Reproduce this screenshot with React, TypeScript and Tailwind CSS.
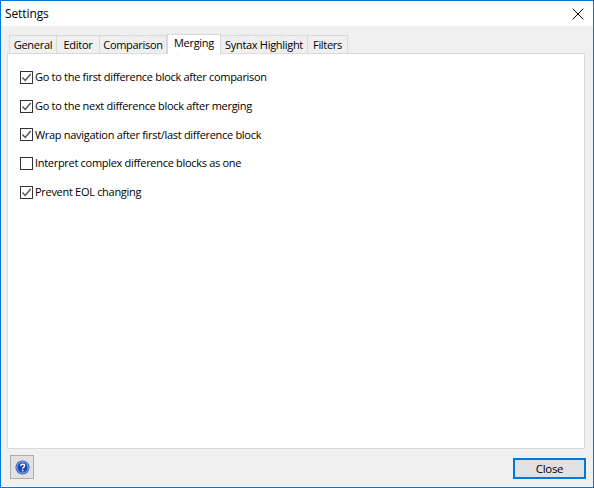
import React from 'react'
import { X } from 'lucide-react'

const tabs = ['General', 'Editor', 'Comparison', 'Merging', 'Syntax Highlight', 'Filters']

const options = [
  { label: 'Go to the first difference block after comparison', checked: true },
  { label: 'Go to the next difference block after merging', checked: true },
  { label: 'Wrap navigation after first/last difference block', checked: true },
  { label: 'Interpret complex difference blocks as one', checked: false },
  { label: 'Prevent EOL changing', checked: true },
]

const tabWidths: Record<string, string> = {
  General: 'w-[48px]',
  Editor: 'w-[43px]',
  Comparison: 'w-[67px]',
  Merging: 'w-[54px]',
  'Syntax Highlight': 'w-[87px]',
  Filters: 'w-[40px]',
}

function HelpIcon() {
  return (
    <svg width="15" height="15" viewBox="0 0 15 15">
      <circle cx="7.5" cy="7.5" r="7" fill="#2f5fc4" />
      <circle cx="7.5" cy="7.5" r="5.6" fill="#1c49b8" stroke="#9db9ea" strokeWidth="1" />
      <path d="M5.6 5.9c.1-1.1.9-1.7 2-1.7s2 .6 2 1.6c0 1.5-2 1.5-2 3" fill="none" stroke="#fff" strokeWidth="1.4" />
      <rect x="6.9" y="9.8" width="1.5" height="1.5" fill="#fff" />
    </svg>
  )
}

function CheckMark() {
  return (
    <svg width="11" height="11" viewBox="0 0 11 11">
      <path d="M1.5 5.5 4.2 8.4 9.7 2" fill="none" stroke="#555" strokeWidth="1.5" />
    </svg>
  )
}

export default function App() {
  return (
    <div className="relative w-[594px] h-[488px] flex flex-col overflow-hidden border border-[#0078d7] bg-[#f0f0f0] text-[11px] tracking-[-0.3px] text-black font-['Open_Sans','Noto_Sans',sans-serif]">
      <div className="h-[25px] shrink-0 bg-white flex items-center justify-between pl-[4px] pr-[5px]">
        <span className="text-[12px] tracking-[-0.1px]">Settings</span>
        <X size={20} strokeWidth={1.2} className="text-black" />
      </div>

      <div className="flex-1 flex flex-col pt-[9px] px-[6px]">
        <div className="flex h-[18px] pl-[2px] items-end relative z-10">
          {tabs.map((t) =>
            t === 'Merging' ? (
              <div
                key={t}
                className={`${tabWidths[t]} h-[20px] -mb-px bg-white border border-b-0 border-[#d9d9d9] flex items-start justify-center leading-[16px] whitespace-nowrap`}
              >
                {t}
              </div>
            ) : (
              <div
                key={t}
                className={`${tabWidths[t]} h-[18px] border border-l-0 first:border-l border-b-0 border-[#d9d9d9] flex items-center justify-center leading-none whitespace-nowrap`}
              >
                {t}
              </div>
            ),
          )}
        </div>

        <div className="h-[396px] w-[578px] bg-white border border-[#d9d9d9] flex flex-col gap-[15.7px] pt-[17px] pl-[12px]">
          {options.map((o) => (
            <label key={o.label} className="flex items-center gap-[2px] h-[13px]">
              <span className="w-[13px] h-[13px] shrink-0 border border-[#333] bg-white flex items-center justify-center">
                {o.checked && <CheckMark />}
              </span>
              <span className="whitespace-nowrap">{o.label}</span>
            </label>
          ))}
        </div>

        <div className="flex-1 flex items-start justify-between pl-[3px] pr-[1px]">
          <button className="mt-[6px] w-[24px] h-[24px] bg-[#e1e1e1] border border-[#adadad] flex items-center justify-center">
            <HelpIcon />
          </button>
          <button className="mt-[9px] w-[73px] h-[21px] bg-[#e1e1e1] border-2 border-[#0078d7] flex items-center justify-center text-[11.5px]">
            Close
          </button>
        </div>
      </div>

      {/* stock-site watermark, sits under the tab labels */}
      <div className="absolute left-[125px] top-[26px] z-[5] pointer-events-none text-[33px] leading-[32px] font-bold tracking-[1px] text-white/50 [text-shadow:0_0_1px_rgba(0,0,0,0.08)]">
        SOFTPEDIA
      </div>
    </div>
  )
}
